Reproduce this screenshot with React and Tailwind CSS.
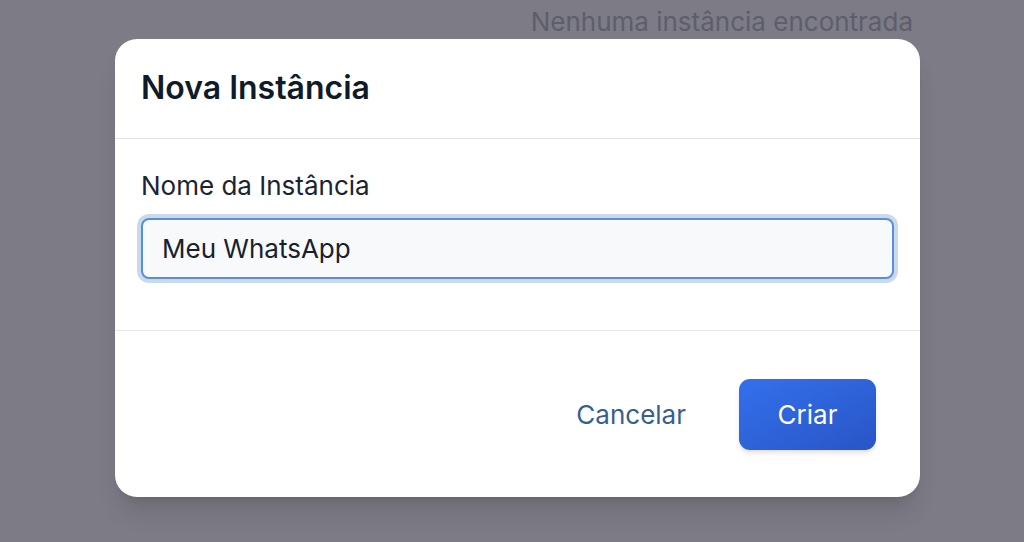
import React, { useState } from 'react';

const App = () => {
  const [name, setName] = useState('Meu WhatsApp');

  return (
    <div className="relative w-full h-[542px] overflow-hidden bg-[#7c7b86] font-['Inter',sans-serif]">
      {/* page content behind the overlay */}
      <div className="h-[39px] pr-[111px] pt-[8px] text-right text-[26px] leading-[28px] text-[#5d5e6c]">
        Nenhuma instância encontrada
      </div>

      {/* modal */}
      <div className="ml-[115px] w-[805px] rounded-[22px] bg-white shadow-xl">
        <div className="h-[100px] flex items-center px-[26px] pb-[2px] border-b border-[#e2e3e8]">
          <h2 className="text-[32px] leading-[40px] font-semibold text-[#0f1b29]">Nova Instância</h2>
        </div>

        <div className="h-[192px] px-[26px] pt-[32px] border-b border-[#e6e7eb]">
          <label className="block text-[26px] leading-[30px] text-[#1a2432]">Nome da Instância</label>
          <div className="mt-[13px] rounded-[12px] p-[4px] bg-[#cbdaeb] -mx-[4px]">
            <input
              value={name}
              onChange={e => setName(e.target.value)}
              className="block w-full h-[61px] rounded-[8px] border-2 border-[#5a8edb] bg-[#f8f9fb] px-[19px] text-[26px] text-[#18212e] outline-none"
            />
          </div>
        </div>

        <div className="h-[166px] flex items-center justify-end gap-[29px] pr-[44px]">
          <button className="px-[24px] py-[12px] text-[26px] text-[#365f8f]">Cancelar</button>
          <button className="w-[137px] h-[71px] rounded-[11px] bg-gradient-to-br from-[#3470ec] to-[#2955c6] text-[26px] text-white shadow-md">
            Criar
          </button>
        </div>
      </div>
    </div>
  );
};

export default App;
